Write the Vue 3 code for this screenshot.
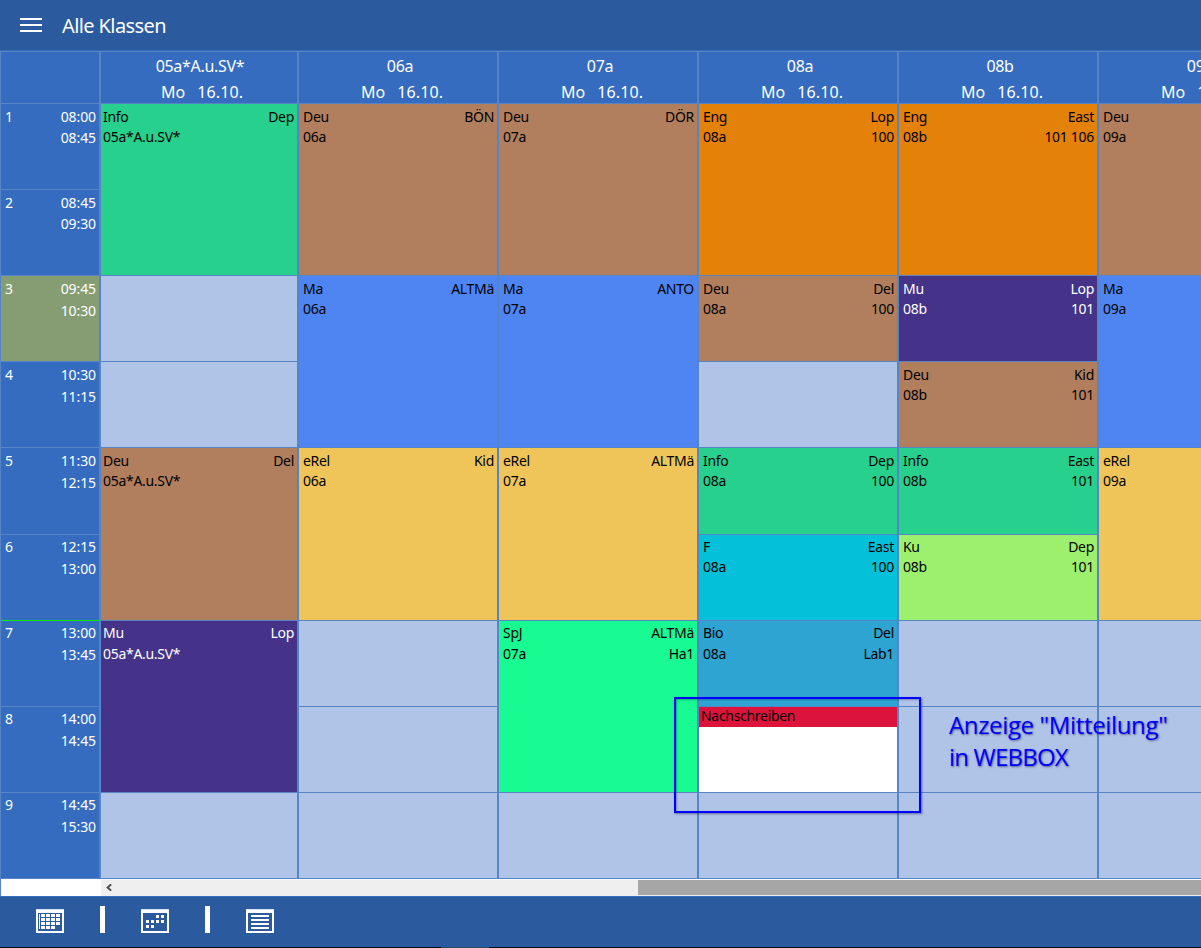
<script setup>
const classes = ['05a*A.u.SV*', '06a', '07a', '08a', '08b', '09a']

const periods = [
  ['08:00', '08:45'],
  ['08:45', '09:30'],
  ['09:45', '10:30'],
  ['10:30', '11:15'],
  ['11:30', '12:15'],
  ['12:15', '13:00'],
  ['13:00', '13:45'],
  ['14:00', '14:45'],
  ['14:45', '15:30'],
]

// [class column, first period, length, colour, subject, teacher, room]
const lessons = [
  [0, 1, 2, 'green', 'Info', 'Dep', ''],
  [0, 3, 1, 'empty'],
  [0, 4, 1, 'empty'],
  [0, 5, 2, 'brown', 'Deu', 'Del', ''],
  [0, 7, 2, 'purple', 'Mu', 'Lop', ''],
  [0, 9, 1, 'empty'],
  [1, 1, 2, 'brown', 'Deu', 'BÖN', ''],
  [1, 3, 2, 'blue', 'Ma', 'ALTMä', ''],
  [1, 5, 2, 'yellow', 'eRel', 'Kid', ''],
  [1, 7, 1, 'empty'],
  [1, 8, 1, 'empty'],
  [1, 9, 1, 'empty'],
  [2, 1, 2, 'brown', 'Deu', 'DÖR', ''],
  [2, 3, 2, 'blue', 'Ma', 'ANTO', ''],
  [2, 5, 2, 'yellow', 'eRel', 'ALTMä', ''],
  [2, 7, 2, 'mint', 'SpJ', 'ALTMä', 'Ha1'],
  [2, 9, 1, 'empty'],
  [3, 1, 2, 'orange', 'Eng', 'Lop', '100'],
  [3, 3, 1, 'brown', 'Deu', 'Del', '100'],
  [3, 4, 1, 'empty'],
  [3, 5, 1, 'green', 'Info', 'Dep', '100'],
  [3, 6, 1, 'cyan', 'F', 'East', '100'],
  [3, 7, 1, 'sky', 'Bio', 'Del', 'Lab1'],
  [3, 8, 1, 'message', 'Nachschreiben'],
  [3, 9, 1, 'empty'],
  [4, 1, 2, 'orange', 'Eng', 'East', '101 106'],
  [4, 3, 1, 'purple', 'Mu', 'Lop', '101'],
  [4, 4, 1, 'brown', 'Deu', 'Kid', '101'],
  [4, 5, 1, 'green', 'Info', 'East', '101'],
  [4, 6, 1, 'lime', 'Ku', 'Dep', '101'],
  [4, 7, 1, 'empty'],
  [4, 8, 1, 'empty'],
  [4, 9, 1, 'empty'],
  [5, 1, 2, 'brown', 'Deu', '', ''],
  [5, 3, 2, 'blue', 'Ma', '', ''],
  [5, 5, 2, 'yellow', 'eRel', '', ''],
  [5, 7, 1, 'empty'],
  [5, 8, 1, 'empty'],
  [5, 9, 1, 'empty'],
].map(([col, start, span, tone, subject, teacher, room]) => ({ col, start, span, tone, subject, teacher, room }))

const monthCells = []
for (let r = 0; r < 4; r++) for (let c = 0; c < (r === 3 ? 3 : 4); c++) monthCells.push([5 + c * 5, 5 + r * 4])
const dots = [[15, 6], [20, 6], [5, 11], [10, 11], [15, 11], [20, 11], [5, 16], [10, 16]]
</script>

<template>
  <div class="app">
    <header class="topbar">
      <svg class="menu" width="22" height="14" viewBox="0 0 22 14" shape-rendering="crispEdges">
        <path d="M0 1H22M0 7H22M0 13H22" stroke="#fff" stroke-width="2" />
      </svg>
      <h1><span>Alle Klassen</span></h1>
    </header>

    <main class="timetable">
      <div class="corner"></div>
      <div v-for="(name, i) in classes" :key="name" class="head" :class="{ first: i === 0 }" :style="{ gridColumn: i + 2 }">
        <span>{{ name }}</span>
        <span class="date"><span>Mo</span><span>16.10.</span></span>
      </div>
      <div
        v-for="(p, i) in periods"
        :key="'p' + i"
        class="period"
        :class="{ current: i === 2, now: i === 5, tight: i < 2, late: i > 4 }"
        :style="{ gridRow: i + 2 }"
      >
        <span>{{ i + 1 }}</span>
        <span class="times"><span>{{ p[0] }}</span><span>{{ p[1] }}</span></span>
      </div>
      <div
        v-for="l in lessons"
        :key="l.col + '-' + l.start"
        class="lesson"
        :class="[l.tone, { first: l.col === 0, late: l.start > 5, low: l.start >= 7 }]"
        :style="{ gridColumn: l.col + 2, gridRow: `${l.start + 1} / span ${l.span}` }"
      >
        <div v-if="l.tone === 'message'" class="notice">{{ l.subject }}</div>
        <template v-else-if="l.tone !== 'empty'">
          <div class="line"><span>{{ l.subject }}</span><span>{{ l.teacher }}</span></div>
          <div class="line"><span>{{ classes[l.col] }}</span><span>{{ l.room }}</span></div>
        </template>
      </div>
    </main>

    <div class="scroll">
      <div class="scroll-corner"></div>
      <div class="track">
        <svg width="6" height="7" viewBox="0 0 6 7"><path d="M5.2 .3L1.6 3.5L5.2 6.7" fill="none" stroke="#505050" stroke-width="2" /></svg>
        <div class="thumb"></div>
      </div>
    </div>

    <footer class="toolbar">
      <svg width="28" height="24" viewBox="0 0 28 24" shape-rendering="crispEdges">
        <path d="M0 0H28V24H0ZM2 4V22H26V4Z" fill="#fff" fill-rule="evenodd" />
        <path d="M0 0H28V1H0Z" fill="#d5dfed" />
        <rect x="3" y="5" width="1" height="15" fill="#fff" />
        <rect v-for="(c, i) in monthCells" :key="i" :x="c[0]" :y="c[1]" width="4" height="3" fill="#fff" />
      </svg>
      <i class="divider"></i>
      <svg width="28" height="24" viewBox="0 0 28 24" shape-rendering="crispEdges">
        <path d="M0 0H28V24H0ZM2 4V22H26V4Z" fill="#fff" fill-rule="evenodd" />
        <path d="M0 0H28V1H0Z" fill="#d5dfed" />
        <rect v-for="(c, i) in dots" :key="i" :x="c[0]" :y="c[1]" width="3" height="3" fill="#fff" />
      </svg>
      <i class="divider"></i>
      <svg width="28" height="24" viewBox="0 0 28 24" shape-rendering="crispEdges">
        <path d="M0 0H28V24H0ZM2 4V22H26V4Z" fill="#fff" fill-rule="evenodd" />
        <path d="M0 0H28V1H0Z" fill="#d5dfed" />
        <path d="M5 7H23M5 11H23M5 15H23M5 19H23" stroke="#fff" stroke-width="2" />
      </svg>
    </footer>
    <div class="edge"><i></i></div>

    <div class="frame"></div>
    <div class="caption">Anzeige "Mitteilung"<br /><span>in WEBBOX</span></div>
  </div>
</template>

<style>
body { margin: 0; overflow: hidden; }
</style>

<style scoped>
.app {
  position: relative;
  width: 1201px;
  height: 948px;
  overflow: hidden;
  display: flex;
  flex-direction: column;
  background: #2b5a9f;
  font: 14px/20px "Noto Sans", "Open Sans", sans-serif;
  color: #fff;
}
.topbar {
  box-sizing: border-box;
  height: 51px;
  flex: none;
  display: flex;
  align-items: center;
  padding-left: 20px;
  border-bottom: 1px solid #356cc0;
}
.menu { flex: none; }
h1 { margin: 2px 0 0 20px; font-size: 20px; font-weight: 400; line-height: 30px; letter-spacing: -0.6px; }
.timetable {
  flex: none;
  box-sizing: border-box;
  width: 1300px;
  height: 828px;
  display: grid;
  grid-template-columns: 100px 198px repeat(5, 200px);
  grid-template-rows: 52px repeat(4, 86px) 87px repeat(4, 86px);
  border-left: 1px solid #5585c5;
  border-top: 1px solid #5585c5;
}
.corner, .head, .period, .lesson {
  box-sizing: border-box;
  border-right: 2px solid #5585c5;
  border-bottom: 1px solid #5585c5;
  min-width: 0;
  overflow: hidden;
}
.corner { grid-column: 1; grid-row: 1; background: #356cc0; }
.head {
  grid-row: 1;
  display: flex;
  flex-direction: column;
  align-items: center;
  padding: 1px 0 0 4px;
  background: #356cc0;
  font-size: 16px;
  line-height: 26px;
  letter-spacing: -0.3px;
}
.head.first { padding-left: 2px; }
.date { display: flex; gap: 12px; padding-left: 4px; letter-spacing: 0.1px; }
.period {
  grid-column: 1;
  display: flex;
  justify-content: space-between;
  padding: 2px 3px 0 4px;
  background: #356cc0;
  line-height: 22px;
  letter-spacing: -0.1px;
}
.period.late { padding-top: 1px; }
.times { display: flex; flex-direction: column; text-align: right; }
.tight .times span + span { margin-top: -1px; }
.period.current { background: #869d74; }
.period.now { border-bottom-color: #00f000; }
.lesson { padding: 3px 3px 0 4px; color: #000; letter-spacing: -0.3px; }
.lesson.first { padding-left: 2px; }
.lesson.late { padding-top: 2px; }
.line { display: flex; justify-content: space-between; }
.low .line + .line { margin-top: 1px; }
.empty { background: #b0c4e7; }
.green { background: #28d08e; }
.brown { background: #b17f5d; }
.purple { background: #443389; color: #fff; }
.blue { background: #4e85f2; }
.yellow { background: #efc55a; }
.mint { background: #18fa92; }
.orange { background: #e38109; }
.cyan { background: #04c0d8; }
.sky { background: #2da4d2; }
.lime { background: #9df06e; }
.lesson.message { background: #fff; padding: 0; }
.notice { height: 20px; padding-left: 2px; background: #dc143c; line-height: 17px; }
.scroll { display: flex; height: 17px; flex: none; border-left: 1px solid #5585c5; background: #fff; }
.scroll-corner { width: 100px; }
.track { display: flex; align-items: center; flex: 1; margin-top: 1px; padding-left: 5px; background: #efefef; }
.track svg { margin-bottom: 1px; }
.thumb { margin: 0 0 1px auto; width: 563px; height: 15px; background: #a6a6a6; }
.toolbar {
  box-sizing: border-box;
  flex: none;
  height: 51px;
  display: flex;
  gap: 36px;
  padding: 12px 0 0 36px;
  border-top: 1px solid #356fc0;
}
.toolbar svg { flex: none; display: block; }
.divider { width: 5px; height: 27px; margin-top: -3px; background: #fff; }
.edge { height: 1px; background: #050a14; }
.edge i { display: block; width: 48px; height: 1px; margin-left: 441px; background: #34465a; }
.frame {
  position: absolute;
  left: 674px;
  top: 697px;
  width: 243px;
  height: 112px;
  border: 2px solid #00f;
  box-shadow: 1px 1px 2px rgba(0, 0, 60, .45), inset 1px 1px 2px rgba(0, 0, 60, .3);
}
.caption {
  position: absolute;
  left: 949px;
  top: 709px;
  font: 24px/32px "Open Sans", "Noto Sans", sans-serif;
  letter-spacing: -0.35px;
  white-space: nowrap;
  color: #00f;
  text-shadow: 1px 1px 2px rgba(0, 0, 60, .5);
}
.caption span { letter-spacing: -0.8px; }
</style>
